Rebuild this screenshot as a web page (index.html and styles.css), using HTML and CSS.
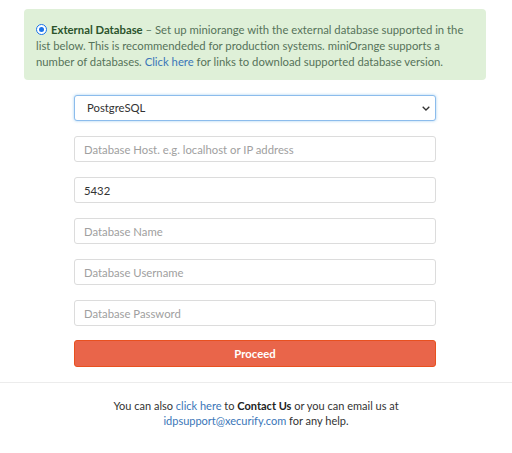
FILE: index.html
```html
<!DOCTYPE html>
<html>
<head>
<meta charset="utf-8">
<link rel="stylesheet" href="styles.css">
</head>
<body>
<div class="notice">
  <p class="notice-text"><span class="radio"><span class="radio-dot"></span></span><b class="title">External Database</b> – Set up miniorange with the external database supported in the list below. This is recommendeded for production systems. miniOrange supports a number of databases. <a class="link" href="#">Click here</a> for links to download supported database version.</p>
</div>
<form class="form">
  <div class="select-wrap">
    <div class="field select">PostgreSQL</div>
    <svg class="chevron" width="8" height="5" viewBox="0 0 8 5"><path d="M0.7 0.7 L4 4 L7.3 0.7" fill="none" stroke="#333" stroke-width="1.3"/></svg>
  </div>
  <input class="field" placeholder="Database Host. e.g. localhost or IP address">
  <input class="field" value="5432">
  <input class="field" placeholder="Database Name">
  <input class="field" placeholder="Database Username">
  <input class="field" placeholder="Database Password">
  <button class="btn" type="button">Proceed</button>
</form>
<hr class="sep">
<p class="footer">You can also <a class="link" href="#">click here</a> to <b class="strong">Contact Us</b> or you can email us at<br><a class="link" href="#">idpsupport@xecurify.com</a> for any help.</p>
</body>
</html>
```
FILE: styles.css
```css
html, body {
  margin: 0;
  padding: 0;
  background: #fff;
  font-family: "Lato", "DejaVu Sans", sans-serif;
}
.notice {
  margin: 9px 26px 0 24px;
  height: 71px;
  box-sizing: border-box;
  background: #dff0d8;
  border-radius: 4px;
  padding: 13px 12px 0 12px;
  color: #56735a;
  font-size: 11.3px;
  line-height: 16px;
}
.notice-text { margin: 0; }
.radio {
  display: inline-block;
  width: 9px;
  height: 9px;
  border-radius: 50%;
  border: 1px solid #1a73e8;
  background: #fff;
  vertical-align: -1px;
  margin-right: 4px;
  position: relative;
  box-sizing: content-box;
}
.radio-dot {
  position: absolute;
  left: 2px;
  top: 2px;
  width: 5px;
  height: 5px;
  border-radius: 50%;
  background: #1a73e8;
}
.title { color: #2b542c; font-weight: 700; }
.link { color: #3a76b8; text-decoration: none; }
.form {
  width: 362px;
  margin: 15px 0 0 74px;
  display: flex;
  flex-direction: column;
  gap: 15px;
}
.select-wrap { position: relative; }
.field {
  display: block;
  box-sizing: border-box;
  width: 362px;
  height: 26px;
  border: 1px solid #dcdcdc;
  border-radius: 3px;
  padding: 0 9px;
  font-family: inherit;
  font-size: 11.3px;
  color: #333;
  background: #fff;
  outline: none;
  margin: 0;
}
.field::placeholder { color: #a0a0a0; }
.select {
  border-color: #8cbcec;
  box-shadow: 0 0 3px rgba(102,175,233,0.6);
  line-height: 24px;
  padding-left: 12px;
}
.chevron {
  position: absolute;
  right: 6px;
  top: 11px;
}
.btn {
  display: block;
  width: 362px;
  height: 27px;
  margin-top: -1px;
  background: #e9654a;
  border: 1px solid #e8511f;
  border-radius: 3px;
  color: #fff;
  font-family: inherit;
  font-size: 11.3px;
  font-weight: 700;
}
.sep {
  margin: 15px 0 0 0;
  border: 0;
  border-top: 1px solid #ececec;
  height: 0;
}
.footer {
  margin: 15px 0 0 0;
  text-align: center;
  color: #333;
  font-size: 11px;
  line-height: 15px;
}
.strong { font-weight: 700; color: #222; }
```
